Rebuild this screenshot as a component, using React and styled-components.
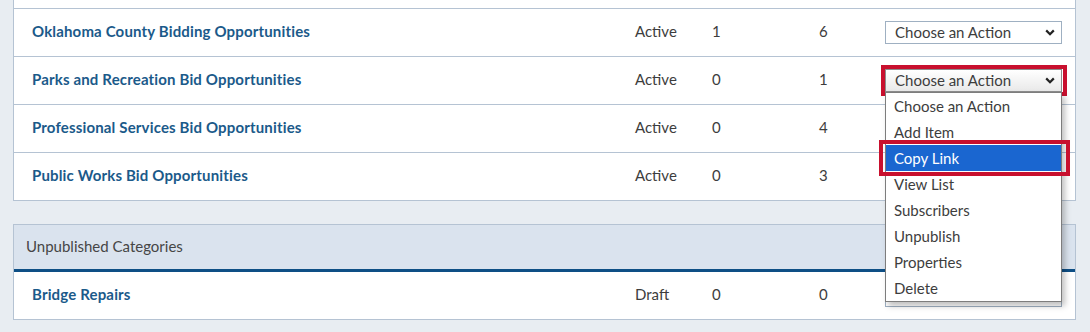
import styled, { createGlobalStyle } from 'styled-components';

const GlobalStyle = createGlobalStyle`
  body {
    margin: 0;
    background: #e8edf2;
    font-family: 'Lato', 'Liberation Sans', sans-serif;
    color: #3d3d3d;
  }
`;

const published = [
  { name: 'Oklahoma County Bidding Opportunities', status: 'Active', items: 1, subs: 6 },
  { name: 'Parks and Recreation Bid Opportunities', status: 'Active', items: 0, subs: 1, open: true },
  { name: 'Professional Services Bid Opportunities', status: 'Active', items: 0, subs: 4 },
  { name: 'Public Works Bid Opportunities', status: 'Active', items: 0, subs: 3 },
];

const unpublished = [
  { name: 'Bridge Repairs', status: 'Draft', items: 0, subs: 0 },
];

const actions = [
  'Choose an Action',
  'Add Item',
  'Copy Link',
  'View List',
  'Subscribers',
  'Unpublish',
  'Properties',
  'Delete',
];

function Chevron() {
  return (
    <svg width='10' height='7' viewBox='0 0 10 7'>
      <path d='M1.2 1.4 L5 5.2 L8.8 1.4' fill='none' stroke='#222' strokeWidth='2.2' />
    </svg>
  );
}

function ActionSelect({ open }) {
  return (
    <ActionCell>
      <Select $open={open}>
        <span>Choose an Action</span>
        <Chevron />
      </Select>
      {open && (
        <OptionList>
          {actions.map((a) => (
            <Option key={a} $active={a === 'Copy Link'}>
              {a}
            </Option>
          ))}
        </OptionList>
      )}
    </ActionCell>
  );
}

function CategoryRow({ row }) {
  return (
    <Row>
      <Name>{row.name}</Name>
      <Cell>{row.status}</Cell>
      <Cell>{row.items}</Cell>
      <Cell>{row.subs}</Cell>
      <ActionSelect open={row.open} />
    </Row>
  );
}

export default function App() {
  return (
    <>
      <GlobalStyle />
      <Page>
        <Panel $cut>
          {published.map((r) => (
            <CategoryRow key={r.name} row={r} />
          ))}
        </Panel>
        <Panel>
          <Header>Unpublished Categories</Header>
          {unpublished.map((r) => (
            <CategoryRow key={r.name} row={r} />
          ))}
        </Panel>
      </Page>
    </>
  );
}

const Page = styled.div`
  padding: 0 14px 14px 13px;
  display: flex;
  flex-direction: column;
  gap: 23px;
`;

const Panel = styled.div`
  background: #fff;
  border: 1px solid #b5c3d3;
  border-top: ${(p) => (p.$cut ? 'none' : '1px solid #b5c3d3')};
  padding-top: ${(p) => (p.$cut ? '8px' : '0')};

  & > div:first-child {
    border-top: ${(p) => (p.$cut ? '1px solid #b5c3d3' : 'none')};
  }
  & > div + div {
    border-top: 1px solid #b5c3d3;
  }
`;

const Header = styled.div`
  height: 47px;
  display: flex;
  align-items: center;
  padding: 0 0 2px 12px;
  box-sizing: border-box;
  background: #dae3ee;
  border-bottom: 3px solid #0e4f85;
  font-size: 15px;
  color: #464646;

  && + div {
    border-top: none;
  }
`;

const Row = styled.div`
  height: 47px;
  display: grid;
  grid-template-columns: 1fr 77px 107px 66px 177px;
  align-items: center;
  padding: 0 13px 0 18px;
`;

const Name = styled.a`
  padding-bottom: 4px;
  font-weight: 700;
  font-size: 15px;
  letter-spacing: 0.16px;
  color: #1b5a8a;
`;

const Cell = styled.span`
  padding-bottom: 4px;
  font-size: 15px;
  color: #3d3d3d;
`;

const ActionCell = styled.div`
  position: relative;
`;

const Select = styled.div`
  position: relative;
  box-sizing: border-box;
  height: 23px;
  display: flex;
  align-items: center;
  justify-content: space-between;
  padding: 0 6px 1px 9px;
  font-size: 15px;
  color: #3d3d3d;
  border: 1px solid ${(p) => (p.$open ? '#8d8d8d' : '#9fb0c2')};
  background: ${(p) => (p.$open ? 'linear-gradient(#ffffff, #e9e9e9)' : '#fff')};

  ${(p) =>
    p.$open &&
    `
    &::after {
      content: '';
      position: absolute;
      inset: -5px -6px -5px -5px;
      border: 4px solid #c8102e;
    }
  `}
`;

const OptionList = styled.div`
  position: absolute;
  top: 23px;
  left: 0;
  right: 0;
  z-index: 5;
  background: #fff;
  border: 1px solid #7d7d7d;
  box-shadow: 3px 4px 6px rgba(0, 0, 0, 0.25);
`;

const Option = styled.div`
  position: relative;
  height: 26px;
  display: flex;
  align-items: center;
  padding: 0 0 1px 8px;
  box-sizing: border-box;
  font-size: 15px;
  color: ${(p) => (p.$active ? '#fff' : '#3d3d3d')};
  background: ${(p) => (p.$active ? '#1a66d0' : 'transparent')};

  ${(p) =>
    p.$active &&
    `
    &::after {
      content: '';
      position: absolute;
      inset: -5px -9px -5px -7px;
      border: 4px solid #c8102e;
    }
  `}
`;
